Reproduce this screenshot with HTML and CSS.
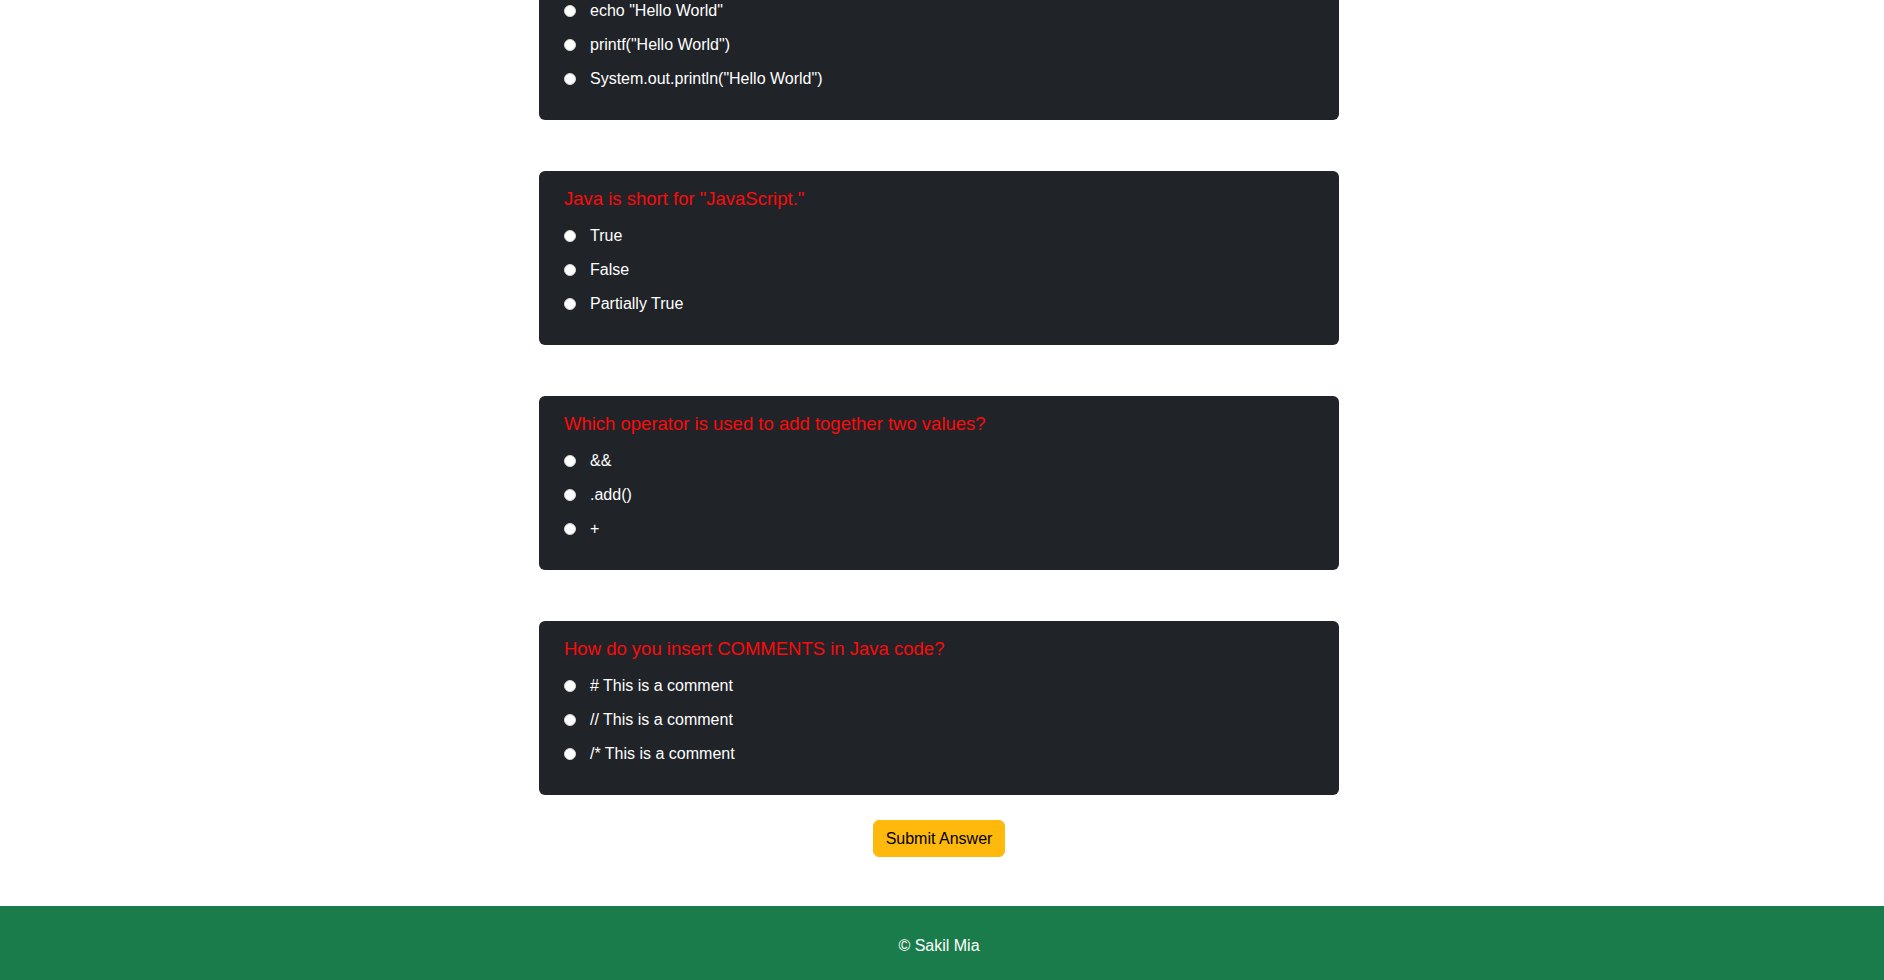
FILE: index.html
```html
<!DOCTYPE html>
<html lang="en">
<head>
<meta charset="utf-8">
<title>Quiz</title>
<link rel="stylesheet" href="styles.css">
</head>
<body>
<main class="quiz">
  <section class="card card-cut">
    <label class="option"><input type="radio" name="q1"><span>echo "Hello World"</span></label>
    <label class="option"><input type="radio" name="q1"><span>printf("Hello World")</span></label>
    <label class="option"><input type="radio" name="q1"><span>System.out.println("Hello World")</span></label>
  </section>
  <section class="card">
    <h5 class="question">Java is short for "JavaScript."</h5>
    <label class="option"><input type="radio" name="q2"><span>True</span></label>
    <label class="option"><input type="radio" name="q2"><span>False</span></label>
    <label class="option"><input type="radio" name="q2"><span>Partially True</span></label>
  </section>
  <section class="card">
    <h5 class="question">Which operator is used to add together two values?</h5>
    <label class="option"><input type="radio" name="q3"><span>&amp;&amp;</span></label>
    <label class="option"><input type="radio" name="q3"><span>.add()</span></label>
    <label class="option"><input type="radio" name="q3"><span>+</span></label>
  </section>
  <section class="card">
    <h5 class="question">How do you insert COMMENTS in Java code?</h5>
    <label class="option"><input type="radio" name="q4"><span># This is a comment</span></label>
    <label class="option"><input type="radio" name="q4"><span>// This is a comment</span></label>
    <label class="option"><input type="radio" name="q4"><span>/* This is a comment</span></label>
  </section>
  <div class="actions">
    <button class="btn-submit" type="button">Submit Answer</button>
  </div>
</main>
<footer class="footer">© Sakil Mia</footer>
</body>
</html>
```
FILE: styles.css
```css
* { box-sizing: border-box; }
html, body {
  margin: 0;
  padding: 0;
  background: #ffffff;
  font-family: "Liberation Sans", Arial, sans-serif;
  font-size: 16px;
  overflow: hidden;
}
.quiz {
  display: flex;
  flex-direction: column;
  align-items: center;
  gap: 51px;
  padding-right: 6px;
}
.card {
  width: 800px;
  background: #202328;
  border-radius: 6px;
  padding: 16px 25px 19px;
  display: flex;
  flex-direction: column;
}
.card-cut {
  margin-top: -1px;
  padding-top: 0;
  border-top-left-radius: 0;
  border-top-right-radius: 0;
}
.question {
  margin: 0 0 13px;
  font-size: 18.5px;
  line-height: 24px;
  font-weight: 400;
  color: #fb0b0b;
}
.option {
  display: flex;
  align-items: center;
  height: 24px;
  line-height: 24px;
  margin-bottom: 10px;
  color: #ffffff;
  font-size: 16px;
}
.option input {
  appearance: none;
  -webkit-appearance: none;
  width: 12px;
  height: 12px;
  margin: 0 14px 0 0;
  border-radius: 50%;
  background: #ffffff;
  border: 1px solid #d8d8d8;
  flex: none;
}
.actions {
  margin-top: -26px;
  display: flex;
  justify-content: center;
}
.btn-submit {
  font-family: "Liberation Sans", Arial, sans-serif;
  font-size: 16px;
  line-height: 23px;
  padding: 6px 12px;
  border: 1px solid #ffb90c;
  background: #ffb90c;
  color: #000000;
  border-radius: 6px;
}
.footer {
  margin-top: 49px;
  background: #1a7c4b;
  color: #ffffff;
  text-align: center;
  padding: 28px 6px 22px 0;
  line-height: 24px;
  font-size: 16px;
}
```
